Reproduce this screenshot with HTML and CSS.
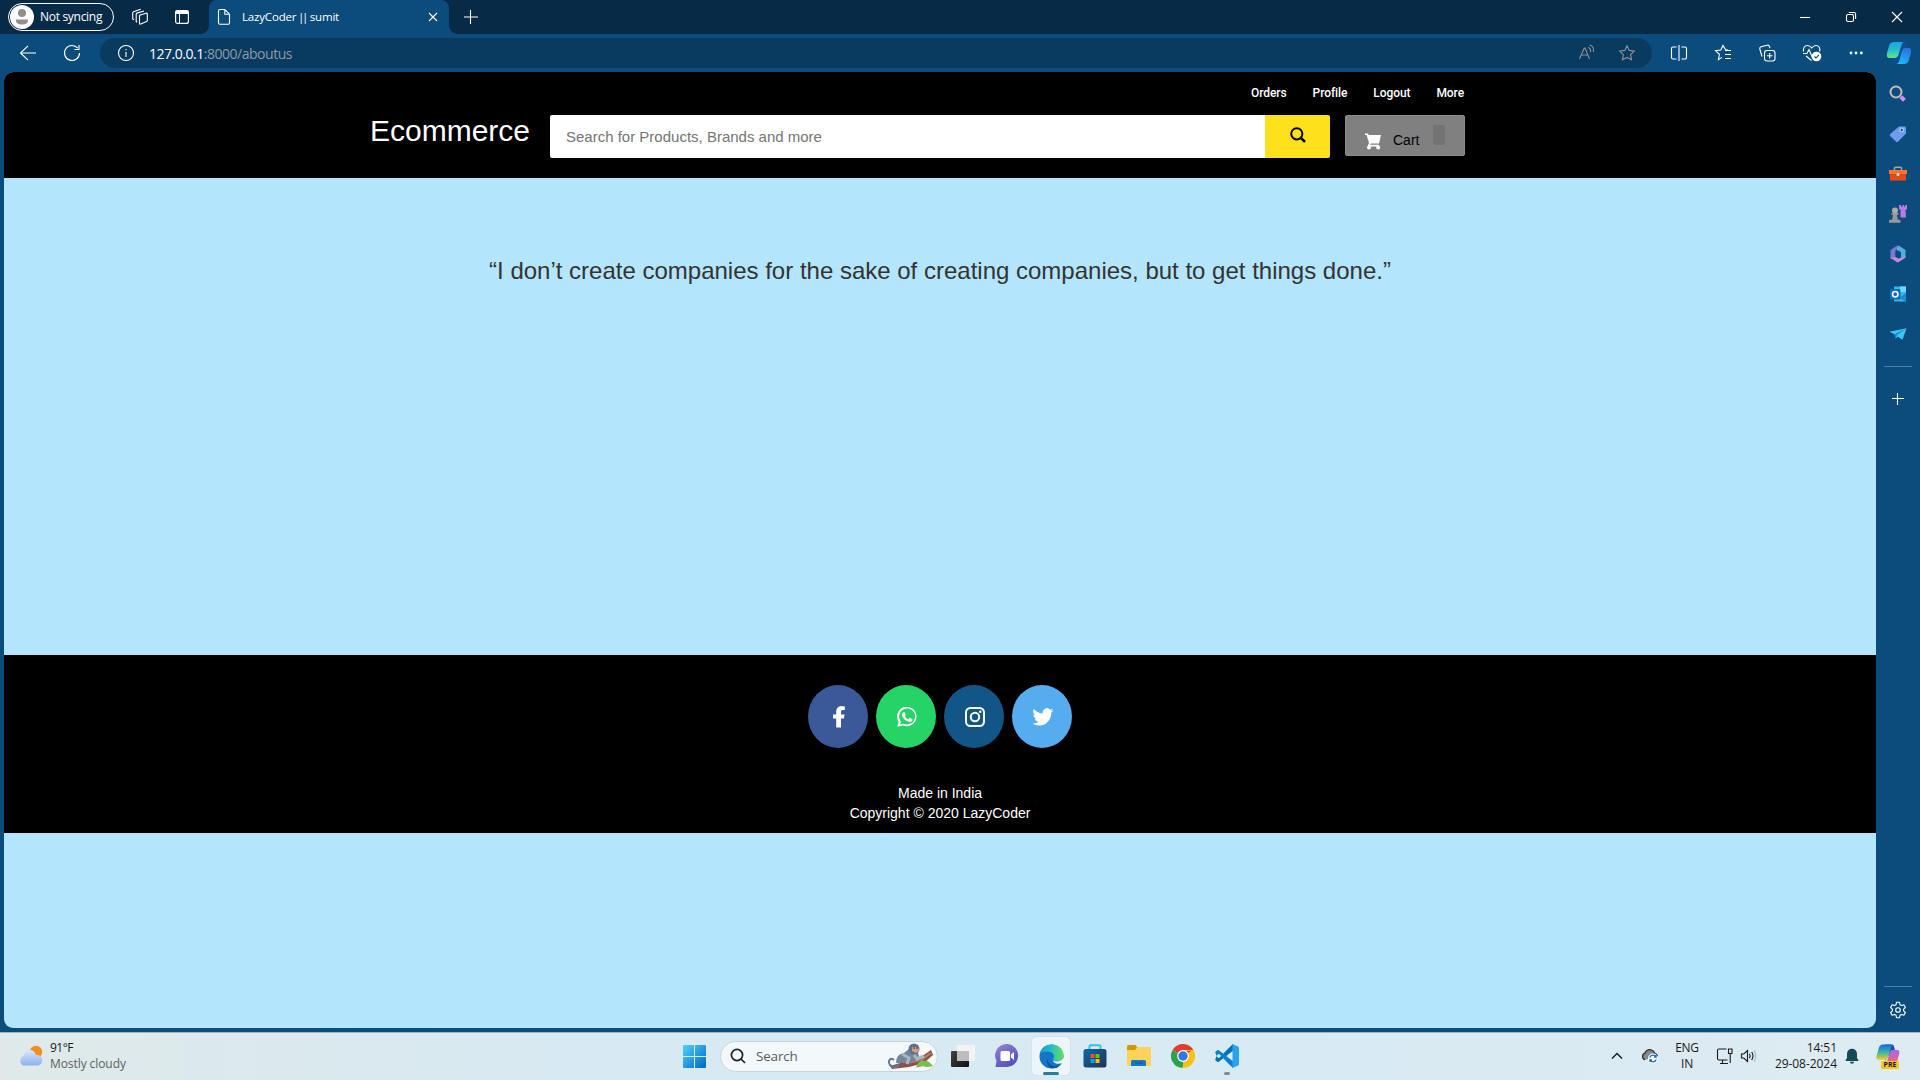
FILE: index.html
```html
<!DOCTYPE html>
<html lang="en">
<head>
<meta charset="utf-8">
<title>LazyCoder || sumit</title>
<link rel="stylesheet" href="styles.css">
</head>
<body>
<div class="titlebar">
  <div class="profile">
    <svg width="24" height="24" viewBox="0 0 24 24"><circle cx="12" cy="12" r="12" fill="#fff"/><circle cx="12" cy="8" r="4" fill="#918f8e"/><path d="M6 14.500h12v1.200c0 2.400-2.600 3.800-6 3.800s-6-1.400-6-3.800z" fill="#918f8e"/></svg>
    <span>Not syncing</span>
  </div>
  <div class="slot workspaces"><svg class="line" width="18" height="18" viewBox="0 0 18 18"><path d="M8.500 7.200 15 5.200q1.300-.3 1.300 1v6.300q0 .8-.8 1.100L9.800 16q-1.300.4-1.300-1zM6.200 14.200l-1-.6V6.200q0-.8.800-1.100L13 3M3 11.800l-1.300-.9V5q0-.8.800-1.200L9.700 1.200"/></svg></div>
  <div class="slot tabactions"><svg width="16" height="16" viewBox="0 0 16 16"><rect x="1.600" y="1.600" width="12.800" height="12.800" rx="2" fill="none" stroke="#fff" stroke-width="1.200"/><path d="M1.600 1.600h12.800V5H1.600z" fill="#fff"/><path d="M5.500 5v9.400" stroke="#fff"/></svg></div>
  <div class="tab">
    <svg class="line" width="14" height="18" viewBox="0 0 14 18"><path d="M3 1.500h4.800l4.700 4.700v8.600a1.500 1.500 0 0 1-1.500 1.500H3a1.500 1.500 0 0 1-1.500-1.500V3A1.500 1.500 0 0 1 3 1.500zM7.800 1.500v4.700h4.700"/></svg>
    <span class="tabname">LazyCoder <span class="bars">||</span> sumit</span>
    <svg class="line" width="10" height="10" viewBox="0 0 10 10"><path d="m1 1 8 8M9 1 1 9"/></svg>
  </div>
  <div class="slot newtab"><svg class="line" width="14" height="14" viewBox="0 0 14 14"><path d="M6.500 0v14M0 7h14"/></svg></div>
  <div class="windowbtns">
    <div><svg class="line" width="12" height="12" viewBox="0 0 12 12"><path d="M1 6.500h10"/></svg></div>
    <div><svg class="line" width="12" height="12" viewBox="0 0 12 12"><rect x="1.500" y="3.500" width="7" height="7" rx="1.500"/><path d="M3.800 1.500H9A1.700 1.700 0 0 1 10.600 3v5"/></svg></div>
    <div><svg class="line" width="12" height="12" viewBox="0 0 12 12"><path d="m1 1 10 10M11 1 1 11"/></svg></div>
  </div>
</div>
<div class="toolbar">
  <div class="slot back"><svg class="line" width="18" height="18" viewBox="0 0 18 18"><path d="M17 9H1.500M9 1.800 1.500 9 9 16.200"/></svg></div>
  <div class="slot reload"><svg class="line" width="18" height="18" viewBox="0 0 18 18"><path d="M16.500 9A7.500 7.500 0 1 1 14.800 4.200M16 1v4.500h-4.500"/></svg></div>
  <div class="address">
    <svg class="line" width="18" height="18" viewBox="0 0 18 18"><circle cx="9" cy="9" r="7.500"/><path d="M9 8v5M9 5v1.300"/></svg>
    <span class="url"><b>127.0.0.1</b>:8000/aboutus</span>
    <svg class="line dim" width="18" height="18" viewBox="0 0 18 18"><path d="m1.500 15 4.700-11h.8l4.500 11M3.300 11h6.500M10 3.500c2 .4 2.800 2 2.500 4.500M11.500 1c3.500.8 4.700 3.400 3.800 7"/></svg>
    <svg class="line dim star" width="18" height="18" viewBox="0 0 18 18"><path d="m9 1.800 2.200 4.600 5.100.7-3.700 3.500.9 5.200L9 13.400l-4.500 2.400.9-5.200-3.700-3.500 5.100-.7z"/></svg>
  </div>
  <div class="tools">
    <div><svg class="line" width="18" height="18" viewBox="0 0 18 18"><path d="M6.500 3H3a1.500 1.500 0 0 0-1.500 1.500v9A1.500 1.500 0 0 0 3 15h3.500M11.500 3H15a1.500 1.500 0 0 1 1.500 1.500v9A1.500 1.500 0 0 1 15 15h-3.500M9 1v16"/></svg></div>
    <div><svg class="line" width="18" height="18" viewBox="0 0 18 18"><path d="M14 6h-2.300L9 1.500 6.800 6l-5.300.7 3.900 3.600-1 5.300L8 13.400M11 6.500h6M11 10.500h6M11 14.500h6"/></svg></div>
    <div><svg class="line" width="18" height="18" viewBox="0 0 18 18"><rect x="6.500" y="6.500" width="10.500" height="10.500" rx="2.500"/><path d="M11.700 9v5.500M9 11.700h5.500M4 12.500 1.800 5A2 2 0 0 1 3 2.800l6-1.500a2 2 0 0 1 2.500 1.300l.4 1.600"/></svg></div>
    <div><svg class="line" width="20" height="18" viewBox="0 0 20 18"><path d="M1.500 7.500C.8 3.500 3 1.500 5.300 1.500c2 0 3.500 1.200 4.400 2.500 1-1.300 2.400-2.500 4.300-2.500 2.500 0 4.500 2 3.700 6M1 9.500h4l2-4 3 7 2.500-4M4 12l5.500 4.500"/><circle cx="14.500" cy="12.500" r="4.800" fill="#fff" stroke="none"/><path d="m12.500 12.500 1.500 1.400 3-3" stroke="#0c4c7c"/></svg></div>
    <div><svg width="16" height="6" viewBox="0 0 16 6"><g fill="#fff"><circle cx="3" cy="3" r="1.400"/><circle cx="8" cy="3" r="1.400"/><circle cx="13.300" cy="3" r="1.400"/></g></svg></div>
  </div>
  <div class="slot copilot"><svg width="26" height="24" viewBox="0 0 26 24"><defs><linearGradient id="ca" x2=".1" y2="1"><stop stop-color="#15a2e8"/><stop offset=".5" stop-color="#21bccb"/><stop offset="1" stop-color="#62e28c"/></linearGradient><linearGradient id="cb" x1=".8" x2=".3" y2="1"><stop stop-color="#2a6fd8"/><stop offset="1" stop-color="#18bcff"/></linearGradient></defs><path d="M15 1h2.500c1.500 0 2.200.7 2.700 2.300L21.500 8H17l-5 13-1.500 2C8 23 7.500 21 7 19.500L6 16z" fill="#124a9c"/><path d="M8.500 1H18c-1.500.2-2 1.500-2.500 3l-3 9.500c-.7 2-1.700 3.500-4 3.500H3.500C1 17 .4 15 1 12l2-7c.8-2.500 2.300-4 5.500-4z" fill="url(#ca)"/><path d="M19.500 7h3c2.500 0 3 2 2.400 5l-2 7c-.8 2.500-2.500 4-5 4H10c1.700 0 2.500-1 3-2.500L16 10c.7-2 1.700-3 3.500-3z" fill="url(#cb)"/></svg></div>
</div>
<div class="middle">
  <div class="page">
    <header class="shop">
      <div class="shopwrap">
        <nav class="links"><a>Orders</a><a>Profile</a><a>Logout</a><a>More</a></nav>
        <div class="searchrow">
          <h1>Ecommerce</h1>
          <div class="field">Search for Products, Brands and more</div>
          <div class="go"><svg width="16" height="16" viewBox="0 0 16 16" fill="none" stroke="#000" stroke-width="2"><circle cx="6.800" cy="6.800" r="5.600"/><path d="m10.700 10.700 4.300 4.200" stroke-width="2.600"/></svg></div>
          <div class="cart"><svg width="18" height="18" viewBox="0 0 18 18" fill="#fff"><path d="M1 1.500h3L4.700 3H17l-2 8.500H6.800l-.6 1.300H15v1.700H5c-1 0-1.400-.8-1-1.600l1-2L2.600 3H1z"/><circle cx="5" cy="15.500" r="2"/><circle cx="14.200" cy="15.500" r="2"/></svg><span>Cart</span><i class="badge"></i></div>
        </div>
      </div>
    </header>
    <main class="quote">“I don’t create companies for the sake of creating companies, but to get things done.”</main>
    <footer class="foot">
      <div class="social">
        <a class="fb"><svg width="14" height="22" viewBox="0 0 14 22"><path d="M4.200 21.500V12.500H1V8.600h3.200V6C4.200 2.300 6.300.3 9.500.3c1.500 0 3.300.2 3.300.2V4h-1.800C9.300 4 9 5 9 6v2.600h3.500l-.6 3.900H9v9z"/></svg></a>
        <a class="wa"><svg width="20" height="20" viewBox="0 0 20 20"><path d="m.3 19.800 1.400-5A9.700 9.700 0 1 1 6 18.400zM6.200 16.400A8 8 0 1 0 3.500 13.900l.4.700-.8 3 3-.8z" fill-rule="evenodd"/><path d="M6 5.500c.5-.7 1.500-.7 1.800 0l.8 2c.1.500-.2.800-.9 1.600.8 1.600 2 2.600 3.600 3.300l1-1.200c.3-.3.500-.3.900-.1l2 1c.4.200.4.500.2 1.100-.5 1.300-2 1.900-3.300 1.600C8.500 14 6.500 12 5.200 9c-.4-1.300-.2-2.600.8-3.500z"/></svg></a>
        <a class="ig"><svg width="20" height="20" viewBox="0 0 20 20"><rect x="1" y="1" width="18" height="18" rx="4.500" fill="none" stroke="#fff" stroke-width="2"/><circle cx="10" cy="10" r="4.200" fill="none" stroke="#fff" stroke-width="2"/><circle cx="15.300" cy="4.700" r="1.200"/></svg></a>
        <a class="tw"><svg width="22" height="18" viewBox="0 0 22 18"><path d="M21.500 2.300c-.8.300-1.600.6-2.500.7.900-.6 1.600-1.400 1.900-2.400-.8.500-1.800.9-2.700 1.100a4.300 4.300 0 0 0-7.400 3.900C7.200 5.400 4 3.700 1.900 1.100a4.300 4.300 0 0 0 1.300 5.800c-.7 0-1.400-.2-1.900-.5 0 2.100 1.400 3.800 3.400 4.300-.6.200-1.300.2-1.900.1.500 1.700 2.100 3 4 3A8.700 8.700 0 0 1 .4 15.500 12.300 12.300 0 0 0 7 17.400c8 0 12.500-6.800 12.300-12.900.9-.6 1.600-1.300 2.200-2.200z"/></svg></a>
      </div>
      <p>Made in India<br>Copyright © 2020 LazyCoder</p>
    </footer>
  </div>
  <aside class="side">
    <div><svg width="18" height="18" viewBox="0 0 18 18"><circle cx="7" cy="7" r="5.500" fill="none" stroke="#c4beb9" stroke-width="2"/><path d="m11.800 11.800 3.700 3.500" stroke="#d48cff" stroke-width="4"/></svg></div>
    <div><svg width="18" height="18" viewBox="0 0 18 18"><path d="M10 1.500h6l1 1v6l-8 8.200q-1 .8-2 0L1.200 11q-.8-1 0-2z" fill="#709bed"/><circle cx="12.800" cy="5" r="1.800" fill="#1b538c" stroke="#bddcff"/></svg></div>
    <div><svg width="18" height="16" viewBox="0 0 18 16"><path d="M5.500 4V2q0-.8 1-.8h5q1 0 1 .8v2" fill="none" stroke="#99a6b0" stroke-width="1.500"/><path d="M0 4h18v4H0z" fill="#ff7331"/><path d="M1 8h16v6.500H1z" fill="#e34d14"/><circle cx="9" cy="8.500" r="1.500" fill="#d7d7d7"/></svg></div>
    <div><svg width="20" height="20" viewBox="0 0 20 20"><circle cx="7" cy="6.500" r="3" fill="#aaa"/><path d="M3.500 9h7v1.800H9l.8 5h2q.7 0 .7 1v2H1v-2q0-1 .7-1h2.500l.8-5H3.500z" fill="#999"/><path d="M11 1h2v1.500h1.500V1H16v1.500h1.200V1H19v4l-1.500 1 .5 7.500h-5.500L12.500 6 11 5z" fill="#bd78e8"/></svg></div>
    <div><svg width="18" height="18" viewBox="0 0 18 18"><path d="M8 .8h2L16.500 5v7l-4.500 1.500V7.500L7.500 5z" fill="#51b0e0"/><path d="m8 .8 2 .5-3.500 4v6.900L3 14.500l-1.500-1V5z" fill="#8075d6"/><path d="m1.500 12.800 5-.8 3 1.500 7-2.500v1.700L9.500 17.300H8z" fill="#bd8bdc"/><path d="m6.500 7 2.500-1.500L12 7.300v3.700l-2.700 1.500L6.500 11z" fill="#0c4c7c"/></svg></div>
    <div><svg width="18" height="18" viewBox="0 0 18 18"><path d="M5 1.500h12v15H5z" fill="#38b5ed"/><path d="M11 1.500h6V7h-6z" fill="#67dcf9"/><path d="m17 8-7 5 7 3.500z" fill="#168fcc"/><rect x="1" y="4" width="10.500" height="10.500" rx="1" fill="#086ebd"/><circle cx="6.200" cy="9.200" r="2.700" fill="none" stroke="#fff" stroke-width="1.600"/></svg></div>
    <div><svg width="18" height="14" viewBox="0 0 18 14"><path d="m.5 4.800 17-3.500-4 11.500-4.500-3-2.500 1.500-1-4z" fill="#3ec5f6"/><path d="m5.500 7.300 12-6L8 8l-1.500 4z" fill="#1488c7"/></svg></div>
    <hr>
    <div class="add"><svg class="line" width="12" height="12" viewBox="0 0 12 12"><path d="M5.500 0v12M0 5.500h12"/></svg></div>
    <hr class="bottomline">
    <div class="gear"><svg class="line" width="18" height="18" viewBox="0 0 18 18"><path d="M7.500 1.300h3l.5 2.400 1.500.9 2.400-.8 1.500 2.700-1.800 1.600v1.800l1.800 1.600-1.500 2.700-2.400-.8-1.500.9-.5 2.400h-3L7 14.300l-1.500-.9-2.400.8-1.500-2.700 1.800-1.600V8.100L1.600 6.500l1.500-2.700 2.400.8L7 3.700z" stroke-linejoin="round"/><circle cx="9" cy="9" r="2.300"/></svg></div>
  </aside>
</div>
<div class="taskbar">
  <div class="weather">
    <svg width="26" height="22" viewBox="0 0 26 22"><defs><linearGradient id="cl" y2="1" x2="0"><stop stop-color="#d9e8fd"/><stop offset="1" stop-color="#8eb1ee"/></linearGradient></defs><circle cx="18" cy="7" r="6.200" fill="#f78d1d"/><path d="M6 20.500a5 5 0 0 1-.5-9.500C6 7 8.800 5 12 5s5.300 2 6 5a5.300 5.300 0 0 1 2 10.500z" fill="url(#cl)"/></svg>
    <div><span class="temp">91°F</span><span class="sky">Mostly cloudy</span></div>
  </div>
  <div class="apps">
    <svg class="start" width="23" height="23" viewBox="0 0 23 23"><defs><linearGradient id="wi" x2="1" y2="1"><stop stop-color="#4fd1fb"/><stop offset="1" stop-color="#0067c5"/></linearGradient></defs><path d="M0 1q0-1 1-1h10v11H0zM12 0h10q1 0 1 1v10H12zM0 12h11v11H1q-1 0-1-1zM12 12h11v10q0 1-1 1H12z" fill="url(#wi)"/></svg>
    <div class="find">
      <svg width="16" height="16" viewBox="0 0 16 16" fill="none" stroke="#222" stroke-width="1.700"><circle cx="7" cy="7" r="5.600"/><path d="m11 11 4 4"/></svg>
      <span>Search</span>
      <svg width="46" height="26" viewBox="0 0 46 26"><path d="M3 23 20 18l14-4 10-7 2 5-9 8-15 4-17 2z" fill="#8d5145"/><path d="m20 20 14-3 10-7" stroke="#b98069" stroke-width="2" fill="none"/><path d="M31 20q5-4 6-2 4-1 9 5-7 2-10 0-5 2-7 1z" fill="#79bd4e"/><path d="M9 20q0-9 8-10l5-4h8l2 7-5 5-4 2z" fill="#72859b"/><path d="M11 21q1 3-3 3-7-1-6-6 2-4 5-1" stroke="#66778d" stroke-width="2" fill="none"/><circle cx="27" cy="6" r="5.500" fill="#607489"/><path d="M25 4h6l1 4-3 2-4-2z" fill="#d29d88"/><circle cx="27" cy="5" r=".8" fill="#222"/><circle cx="30" cy="5" r=".8" fill="#222"/><path d="m15 11 7 4-2 6M27 12l3 4 7-3" fill="none" stroke="#a9b7c4" stroke-width="3"/></svg>
    </div>
    <div class="app"><svg width="24" height="24" viewBox="0 0 24 24"><defs><linearGradient id="tv" x2="1" y2="1"><stop stop-color="#444"/><stop offset="1" stop-color="#111"/></linearGradient></defs><rect y="7" width="18" height="16" rx="1" fill="url(#tv)"/><rect x="6" y="1" width="18" height="16" rx="1" fill="#f3f3f3"/><path d="M6 7h12v10H6z" fill="#bdbdbd"/></svg></div>
    <div class="app"><svg width="24" height="24" viewBox="0 0 24 24"><defs><linearGradient id="ch" x2=".6" y2="1"><stop stop-color="#9185d6"/><stop offset="1" stop-color="#5351bd"/></linearGradient></defs><path d="M.5 23 1.500 17A11.500 11.500 0 1 1 12 23z" fill="url(#ch)"/><rect x="5.500" y="7" width="9.500" height="10" rx="1.500" fill="#fff"/><path d="m16 10.500 3-2.500v8l-3-2.500z" fill="#fff"/></svg></div>
    <div class="app active"><svg width="25" height="25" viewBox="0 0 25 25"><defs><linearGradient id="ed" x2="1"><stop stop-color="#159bd8"/><stop offset=".5" stop-color="#25bec1"/><stop offset="1" stop-color="#6bdf5b"/></linearGradient></defs><circle cx="12.500" cy="12.500" r="12" fill="#1474c5"/><path d="M.6 11C1.500 4.500 6.500.5 12.500.5c7 0 12 5 12 10.500 0 4-3 6.500-6.500 6.500-3 0-4.500-1.200-3.500-2.800 1.500-3-.5-6.700-4.500-7C5 7.300 1.500 8.500.6 11z" fill="url(#ed)"/><path d="M8.500 14c-.5 5 4 9 9 8.300 2.500-.3 4.500-1.800 5.700-3.300l-2 2.500-3.700 2.500-5 .2C9 23 7 18 8.500 14z" fill="#0b4f9c"/><path d="M13.500 14.700c-.6 1.500 1.200 2.800 4.500 2.800 2.500 0 4.700-1 5.800-3h1.200v4.500l-1.800-.2c-4 2-9.500.9-9.700-4.100z" fill="#edf4fb"/></svg><i></i></div>
    <div class="app"><svg width="24" height="24" viewBox="0 0 24 24"><defs><linearGradient id="st" x2="1" y2="1"><stop stop-color="#0c66a8"/><stop offset="1" stop-color="#243155"/></linearGradient></defs><path d="M6.500 6V2.500q0-1.200 1.200-1.200h8.600q1.200 0 1.200 1.200V6" fill="none" stroke="#2cc3ee" stroke-width="2"/><rect x=".5" y="5" width="23" height="18.500" rx="2.500" fill="url(#st)"/><path d="M7.500 10h4v4h-4z" fill="#f15023"/><path d="M12.500 10h4v4h-4z" fill="#7fba00"/><path d="M7.500 15h4v4h-4z" fill="#01a4ef"/><path d="M12.500 15h4v4h-4z" fill="#ffb902"/></svg></div>
    <div class="app"><svg width="24" height="22" viewBox="0 0 24 22"><path d="M0 1.500Q0 0 1.500 0h7L10 2v4H0z" fill="#d69600"/><path d="M0 5h8l2-3h13q1 0 1 1v17q0 1-1 1H1q-1 0-1-1z" fill="#ffd25a"/><path d="M4 21v-4.500q0-1.500 1.500-1.500h12q1.500 0 1.500 1.500V21z" fill="#1676c9"/><path d="M8 18h8" stroke="#0958a5" stroke-width="1.200"/></svg></div>
    <div class="app"><svg width="24" height="24" viewBox="0 0 24 24"><path d="M12 12 1.600 6A12 12 0 0 1 22.400 6z" fill="#e33b2e"/><path d="M12 12 22.400 6A12 12 0 0 1 12 24z" fill="#fbc117"/><path d="M12 12v12A12 12 0 0 1 1.600 6z" fill="#2ba24c"/><path d="M12 6h10.400l.6 1H12zM17.200 15 12 24h-1l3.500-8z" fill="#fbc117"/><circle cx="12" cy="12" r="5.900" fill="#fff"/><circle cx="12" cy="12" r="4.700" fill="#3077e8"/></svg></div>
    <div class="app"><svg width="24" height="24" viewBox="0 0 24 24"><path d="m18 0-5 4.700L4 14.200l-2.700-2L.2 16l2 1.700q.8.500 1.600 0L18 6.800z" fill="#0073b7"/><path d="m18 24-5-4.700L4 9.800l-2.700 2L.2 8l2-1.700q.8-.5 1.600 0L18 17.200z" fill="#0684cb"/><path d="m17.500 0 5.500 2.500q1 .5 1 1.500v16q0 1-1 1.500L17.500 24z" fill="#29a3ed"/></svg><i class="idle"></i></div>
  </div>
  <div class="tray">
    <svg class="dark" width="14" height="10" viewBox="0 0 14 10"><path d="m2 7.500 5-5 5 5" stroke-width="1.400"/></svg>
    <svg class="cloud" width="18" height="16" viewBox="0 0 18 16"><path d="M4 11.800A3.600 3.600 0 0 1 4 5c1-3 4-4 6.500-3 2 .7 3 2 3.300 3.500 1.500.3 2.500 1.500 2.500 3" fill="#898989" stroke="#222" stroke-width="1.200"/><circle cx="12" cy="10.500" r="5" fill="#fff"/><path d="M8.800 9.500a3.500 3.500 0 0 1 6.200-.8V7m0 2h-2M15.200 11.500a3.500 3.500 0 0 1-6.200.8V14m0-2h2" fill="none" stroke="#1372c5" stroke-width="1.300"/></svg>
    <div class="lang">ENG<br>IN</div>
    <svg class="dark network" width="18" height="18" viewBox="0 0 18 18"><path d="M10.500 2H3a1.500 1.500 0 0 0-1.500 1.500v8A1.500 1.500 0 0 0 3 13h8.500M6.500 13v3.500M4 16.500h8M12.500 2h3.500v4.500h-3.500zM14.200 6.500V16"/></svg>
    <svg class="dark volume" width="17" height="14" viewBox="0 0 17 14"><path d="M1.500 5v4h2.200L7.500 12.500v-11L3.700 5zM9.500 4.800q1.300 2 0 4.400M11.700 3q2.600 4 0 8"/><path d="M14 1.300q3.500 5.700 0 11.400" opacity=".25"/></svg>
    <div class="clock">14:51<br>29-08-2024</div>
    <svg class="bell" width="14" height="16" viewBox="0 0 14 16"><path d="M7 .7a5 5 0 0 1 5 5V10l1.500 2.200v.8H.5v-.8L2 10V5.700a5 5 0 0 1 5-5zM5 13.800h4a2 2 0 0 1-4 0z" fill="#164956"/></svg>
    <div class="pre"><svg width="24" height="22" viewBox="0 0 24 22"><defs><linearGradient id="pa" x2="0" y2="1"><stop stop-color="#1b65db"/><stop offset=".5" stop-color="#34b6a4"/><stop offset="1" stop-color="#f6c72a"/></linearGradient><linearGradient id="pb" x2="0" y2="1"><stop stop-color="#ae64e7"/><stop offset="1" stop-color="#f56673"/></linearGradient></defs><path d="M9 .5h7q1.500 0 2 2L19 6.500h-3L9 17z" fill="#174fc0"/><path d="M7 .5h7.500c1 0 1.500.8 1 2L12 13c-.7 2-1.500 2.800-3.500 2.800h-6C.5 15.800 0 14 .5 12l2-7C3.200 2 4.500.5 7 .5z" fill="url(#pa)"/><path d="M16.500 6H21c2.300 0 2.800 1.600 2.200 4l-2 7c-.8 2.500-2 4-4.500 4H10l3.500-12c.6-2 1.400-3 3-3z" fill="url(#pb)"/></svg><b>PRE</b></div>
  </div>
</div>
</body>
</html>
```
FILE: styles.css
```css
* { box-sizing: border-box; }
html, body { margin: 0; height: 100%; overflow: hidden; }
body {
  width: 1920px; height: 1080px; display: flex; flex-direction: column;
  background: #0c4c7c; font-family: "Open Sans", "Noto Sans", sans-serif; color: #fff;
}
svg { display: block; flex: none; }
.line { fill: none; stroke: #fff; stroke-width: 1.1; }
.line.dim { stroke: #8d9296; }
.slot { display: flex; align-items: center; justify-content: center; flex: none; height: 100%; }

.titlebar { height: 34px; flex: none; display: flex; background: #072b47; }
.profile {
  margin: 3px 0 0 8px; width: 106px; height: 28px; border: 1px solid #fff; border-radius: 14px;
  display: flex; align-items: center; padding-left: 1px; gap: 6px;
  font-size: 12px; font-weight: 500; letter-spacing: -.3px; white-space: nowrap;
}
.profile span { margin-top: -1px; }
.workspaces { width: 52px; }
.tabactions { width: 32px; }
.tab {
  margin-left: 11px; width: 240px; height: 34px; background: #0c4c7c; border-radius: 8px 8px 0 0;
  display: flex; align-items: center; padding: 0 11px 0 8px; font-size: 11.500px; position: relative;
}
.tab::before, .tab::after {
  content: ""; position: absolute; bottom: 0; width: 8px; height: 8px;
}
.tab::before { left: -8px; background: radial-gradient(circle at 0 0, #072b47 7.500px, #0c4c7c 8px); }
.tab::after { right: -8px; background: radial-gradient(circle at 100% 0, #072b47 7.500px, #0c4c7c 8px); }
.tabname { flex: 1; margin: -1px 0 0 11px; letter-spacing: -.18px; }
.bars { letter-spacing: -2.400px; margin: 0 1px 0 -1px; }
.newtab { width: 43px; }
.windowbtns { margin-left: auto; display: flex; }
.windowbtns div { width: 46px; display: flex; align-items: center; justify-content: center; }

.toolbar { height: 38px; flex: none; display: flex; }
.back { width: 56px; }
.reload { width: 32px; }
.address {
  margin: 4px 0 0 12px; width: 1552px; height: 30px; border-radius: 15px; background: #093a60;
  display: flex; align-items: center; padding: 0 16px 0 17px; flex: none;
}
.url { flex: 1; margin-left: 14px; font-size: 14px; letter-spacing: -.48px; color: #8d9aa3; }
.url b { font-weight: 400; color: #fff; }
.star { margin-left: 22px; }
.tools { display: flex; margin-left: 5px; }
.tools div { width: 44.200px; flex: none; display: flex; align-items: center; justify-content: center; }
.copilot { margin-left: auto; width: 43px; }

.middle { flex: 1; display: flex; padding: 0 0 4px 4px; min-height: 0; }
.page {
  width: 1872px; background: #b3e5fc; border-radius: 9px; overflow: hidden;
  font-family: "Liberation Sans", Arial, sans-serif;
}
.shop { height: 106px; background: #000; }
.shopwrap { margin: 0 auto; width: 1140px; }
.links {
  height: 43px; padding: 11px 46px 0 0; display: flex; justify-content: flex-end; gap: 26px;
  font: 500 12px/20px Roboto, sans-serif; letter-spacing: -.08px;
}
.searchrow { display: flex; align-items: flex-start; }
h1 { margin: -1px 0 0; width: 180px; font-size: 30px; line-height: 33px; font-weight: 400; }
.field {
  width: 715px; height: 43px; background: #fff; border-radius: 2px 0 0 2px;
  color: #757575; font-size: 15px; line-height: 43px; padding-left: 16px;
}
.go {
  width: 65px; height: 43px; background: #ffe11b; border-radius: 0 2px 2px 0;
  display: flex; justify-content: center; padding-top: 12px;
}
.cart {
  margin-left: 15px; width: 120px; height: 41px; border: 1px solid #8c8c8c; border-radius: 2px;
  background: #808080; color: #000; display: flex; padding-left: 18px; font-size: 14px;
}
.cart svg { margin-top: 16px; }
.cart span { margin: 16px 14px 0 11px; line-height: 16px; }
.badge { margin-top: 9px; width: 12px; height: 20px; border-radius: 2px; background: #737373; }
.quote { height: 477px; padding-top: 79px; text-align: center; font-size: 24px; line-height: 27px; color: #333; }
.foot { height: 178px; background: #000; padding-top: 30px; text-align: center; }
.social { display: flex; justify-content: center; gap: 8px; }
.social a {
  width: 60px; height: 63px; border-radius: 50%; display: flex; align-items: center; justify-content: center; fill: #fff;
}
.social svg { margin-left: 1px; }
.fb { background: #3b5998; }
.wa { background: #25d366; }
.ig { background: #125688; }
.tw { background: #55acee; }
.foot p { margin: 35px 0 0; font-size: 14px; line-height: 20px; }

.side { width: 44px; display: flex; flex-direction: column; padding-top: 2px; }
.side div { height: 40px; flex: none; display: flex; align-items: center; justify-content: center; }
.side hr { margin: 12px 8px; width: 28px; height: 1px; border: 0; background: #527f9f; flex: none; }
.side .bottomline { margin: auto 8px 3px; }
.side .gear { margin-bottom: -2px; }

.taskbar {
  height: 48px; flex: none; display: flex; align-items: center; border-top: 1px solid #a9b5bb; padding-bottom: 1px;
  background: linear-gradient(90deg, #dfe9e9, #d7e9f2 30%, #d8eaf3 70%, #deebf2); color: #1a1a1a; font-size: 12px;
}
.weather { display: flex; align-items: center; width: 683px; padding-left: 18px; gap: 6px; }
.weather span { display: block; line-height: 16px; }
.temp { letter-spacing: -.5px; }
.sky { color: #5b6062; letter-spacing: -.08px; }
.apps { display: flex; align-items: center; height: 100%; }
.find {
  margin: 0 3px 0 14px; width: 218px; height: 31px; border-radius: 16px; background: #f3f8fb; border: 1px solid #c3d6df;
  display: flex; align-items: center; padding: 0 4px 0 9px; font-size: 13.500px; color: #5d5d5d;
}
.find span { flex: 1; margin-left: 10px; letter-spacing: -.2px; }
.app { width: 44px; height: 38px; display: flex; align-items: center; justify-content: center; position: relative; }
.app.active { width: 38px; margin: 0 3px; border-radius: 4px; background: #edf5fa; box-shadow: 0 0 1px #9eb3bf; }
.app i { position: absolute; bottom: 0; width: 16px; height: 3px; border-radius: 2px; background: #268093; }
.app .idle { width: 6px; background: #858b8e; }
.tray { margin-left: auto; display: flex; align-items: center; line-height: 16px; padding-right: 20px; }
.dark { fill: none; stroke: #1a1a1a; stroke-width: 1.100; }
.cloud { margin: 0 16px 0 17px; }
.lang { width: 24px; text-align: center; letter-spacing: -.3px; }
.network { margin-left: 17px; }
.volume { margin-left: 6px; }
.clock { width: 80px; text-align: right; letter-spacing: -.05px; }
.bell { margin-left: 8px; }
.pre { margin-left: 17px; width: 24px; height: 24px; position: relative; }
.pre b {
  position: absolute; left: 5px; bottom: -1px; width: 18px; height: 8px; border-radius: 1px; background: #fdc714;
  color: #221b00; font-size: 7px; line-height: 8px; text-align: center;
}
```
